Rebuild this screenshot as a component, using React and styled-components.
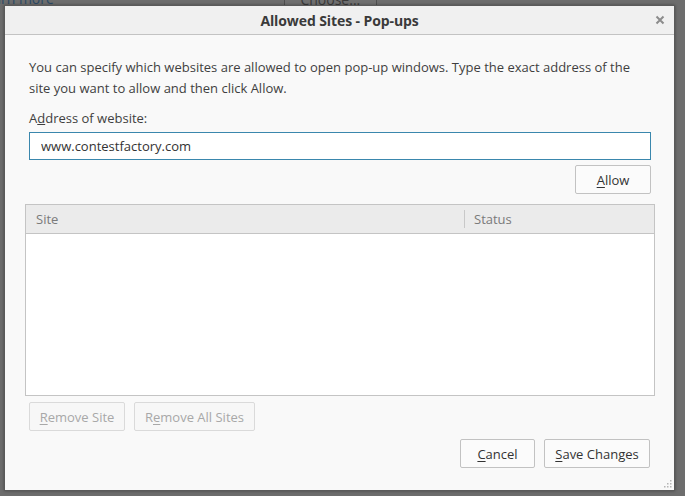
import React from 'react'
import styled, { createGlobalStyle } from 'styled-components'

const GlobalStyle = createGlobalStyle`
  html, body {
    margin: 0;
    padding: 0;
    background: #6d6d6d;
    font-family: 'Open Sans', 'Noto Sans', sans-serif;
    color: #333333;
  }
  * { box-sizing: border-box; }
`

const App = () => {
    return (
        <Desktop>
            <GlobalStyle />
            <PageBehind>
                <MoreLink>Learn more</MoreLink>
                <ChooseButton>Choose...</ChooseButton>
            </PageBehind>

            <Dialog>
                <TitleBar>
                    <Title>Allowed Sites - Pop-ups</Title>
                    <CloseButton aria-label="Close">
                        <svg width="10" height="10" viewBox="0 0 10 10">
                            <path d="M1.5 1.5 L8.5 8.5 M8.5 1.5 L1.5 8.5" stroke="#8c8c8c" strokeWidth="2" />
                        </svg>
                    </CloseButton>
                </TitleBar>

                <Body>
                    <Intro>
                        You can specify which websites are allowed to open pop-up windows. Type the exact address of the
                        site you want to allow and then click Allow.
                    </Intro>
                    <Label>A<u>d</u>dress of website:</Label>
                    <AddressInput value="www.contestfactory.com" readOnly />
                    <AllowRow>
                        <Button $width={76}><u>A</u>llow</Button>
                    </AllowRow>

                    <SiteTable>
                        <HeaderRow>
                            <HeaderCell>Site</HeaderCell>
                            <HeaderCell $divider>Status</HeaderCell>
                        </HeaderRow>
                        <TableBody />
                    </SiteTable>

                    <ButtonRow>
                        <Button disabled $width={96}><u>R</u>emove Site</Button>
                        <Button disabled $width={121}>R<u>e</u>move All Sites</Button>
                    </ButtonRow>

                    <Footer>
                        <Button $width={75}><u>C</u>ancel</Button>
                        <Button $width={106}><u>S</u>ave Changes</Button>
                    </Footer>
                </Body>

                <Grip width="8" height="8" viewBox="0 0 8 8">
                    <rect x="6" y="0" width="1.5" height="1.5" fill="#b5b5b5" />
                    <rect x="3" y="3" width="1.5" height="1.5" fill="#b5b5b5" />
                    <rect x="6" y="3" width="1.5" height="1.5" fill="#b5b5b5" />
                    <rect x="0" y="6" width="1.5" height="1.5" fill="#b5b5b5" />
                    <rect x="3" y="6" width="1.5" height="1.5" fill="#b5b5b5" />
                    <rect x="6" y="6" width="1.5" height="1.5" fill="#b5b5b5" />
                </Grip>
            </Dialog>
        </Desktop>
    )
}

export default App

const Desktop = styled.div`
    position: relative;
    width: 685px;
    height: 496px;
    overflow: hidden;
    background: #6d6d6d;
`

const PageBehind = styled.div`
    display: flex;
    align-items: flex-start;
    height: 10px;
    margin-top: -10px;
`

const MoreLink = styled.span`
    font-size: 14px;
    line-height: 17px;
    color: #2b4a66;
    margin-left: -22px;
`

const ChooseButton = styled.div`
    margin-left: 230px;
    width: 93px;
    height: 16px;
    border: 1px solid #4f4f4f;
    background: #707070;
    color: #3a3a3a;
    font-size: 14px;
    text-align: center;
    line-height: 10px;
    padding-top: 4px;
`

const Dialog = styled.div`
    position: absolute;
    left: 4px;
    top: 5px;
    width: 671px;
    height: 486px;
    display: flex;
    flex-direction: column;
    background: #f9f9f9;
    border: 1px solid #5a5a5a;
    box-shadow: 0 0 3px rgba(0, 0, 0, 0.35);
`

const TitleBar = styled.div`
    position: relative;
    height: 29px;
    flex: none;
    display: flex;
    align-items: center;
    justify-content: center;
    background: #f0f0f0;
    border-bottom: 1px solid #c3c3c3;
`

const Title = styled.h1`
    margin: 0;
    font-size: 14px;
    font-weight: 700;
    color: #3a3a3a;
    letter-spacing: -0.1px;
`

const CloseButton = styled.span`
    position: absolute;
    right: 9px;
    top: 9px;
    display: flex;
`

const Body = styled.div`
    flex: 1;
    display: flex;
    flex-direction: column;
    padding: 22px 19px 0 20px;
`

const Intro = styled.p`
    margin: 0 4px;
    font-size: 13px;
    line-height: 21px;
    color: #3f3f3f;
`

const Label = styled.div`
    margin: 9px 4px 0;
    font-size: 13px;
    line-height: 21px;
    color: #3f3f3f;
`

const AddressInput = styled.input`
    margin: 3px 4px 0;
    height: 28px;
    padding: 0 11px;
    border: 1px solid #3a87ad;
    background: #ffffff;
    font-family: 'Open Sans', 'Noto Sans', sans-serif;
    font-size: 13px;
    color: #333333;
    outline: none;
`

const AllowRow = styled.div`
    display: flex;
    justify-content: flex-end;
    margin: 5px 4px 0;
`

const Button = styled.button`
    width: ${p => p.$width}px;
    height: 29px;
    padding: 0;
    border: 1px solid ${p => (p.disabled ? '#dadada' : '#c2c2c2')};
    border-radius: 2px;
    background: ${p => (p.disabled ? '#f7f7f7' : '#fbfbfb')};
    font-family: 'Open Sans', 'Noto Sans', sans-serif;
    font-size: 13px;
    color: ${p => (p.disabled ? '#a8a8a8' : '#333333')};
    u {
        text-underline-offset: 2px;
    }
`

const SiteTable = styled.div`
    margin-top: 10px;
    height: 192px;
    display: flex;
    flex-direction: column;
    border: 1px solid #c4c4c4;
    background: #ffffff;
`

const HeaderRow = styled.div`
    display: grid;
    grid-template-columns: 438px 1fr;
    height: 29px;
    background: #ebebeb;
    border-bottom: 1px solid #c4c4c4;
`

const HeaderCell = styled.div`
    display: flex;
    align-items: center;
    padding-left: 10px;
    font-size: 13px;
    color: #7a7a7a;
    position: relative;
    ${p => p.$divider && `
        &::before {
            content: '';
            position: absolute;
            left: 0;
            top: 5px;
            bottom: 5px;
            border-left: 1px solid #c8c8c8;
        }
    `}
`

const TableBody = styled.div`
    flex: 1;
`

const ButtonRow = styled.div`
    display: flex;
    gap: 9px;
    margin: 6px 4px 0;
`

const Footer = styled.div`
    display: flex;
    justify-content: flex-end;
    gap: 9px;
    margin: 8px 5px 0;
`

const Grip = styled.svg`
    position: absolute;
    right: 2px;
    bottom: 2px;
`
